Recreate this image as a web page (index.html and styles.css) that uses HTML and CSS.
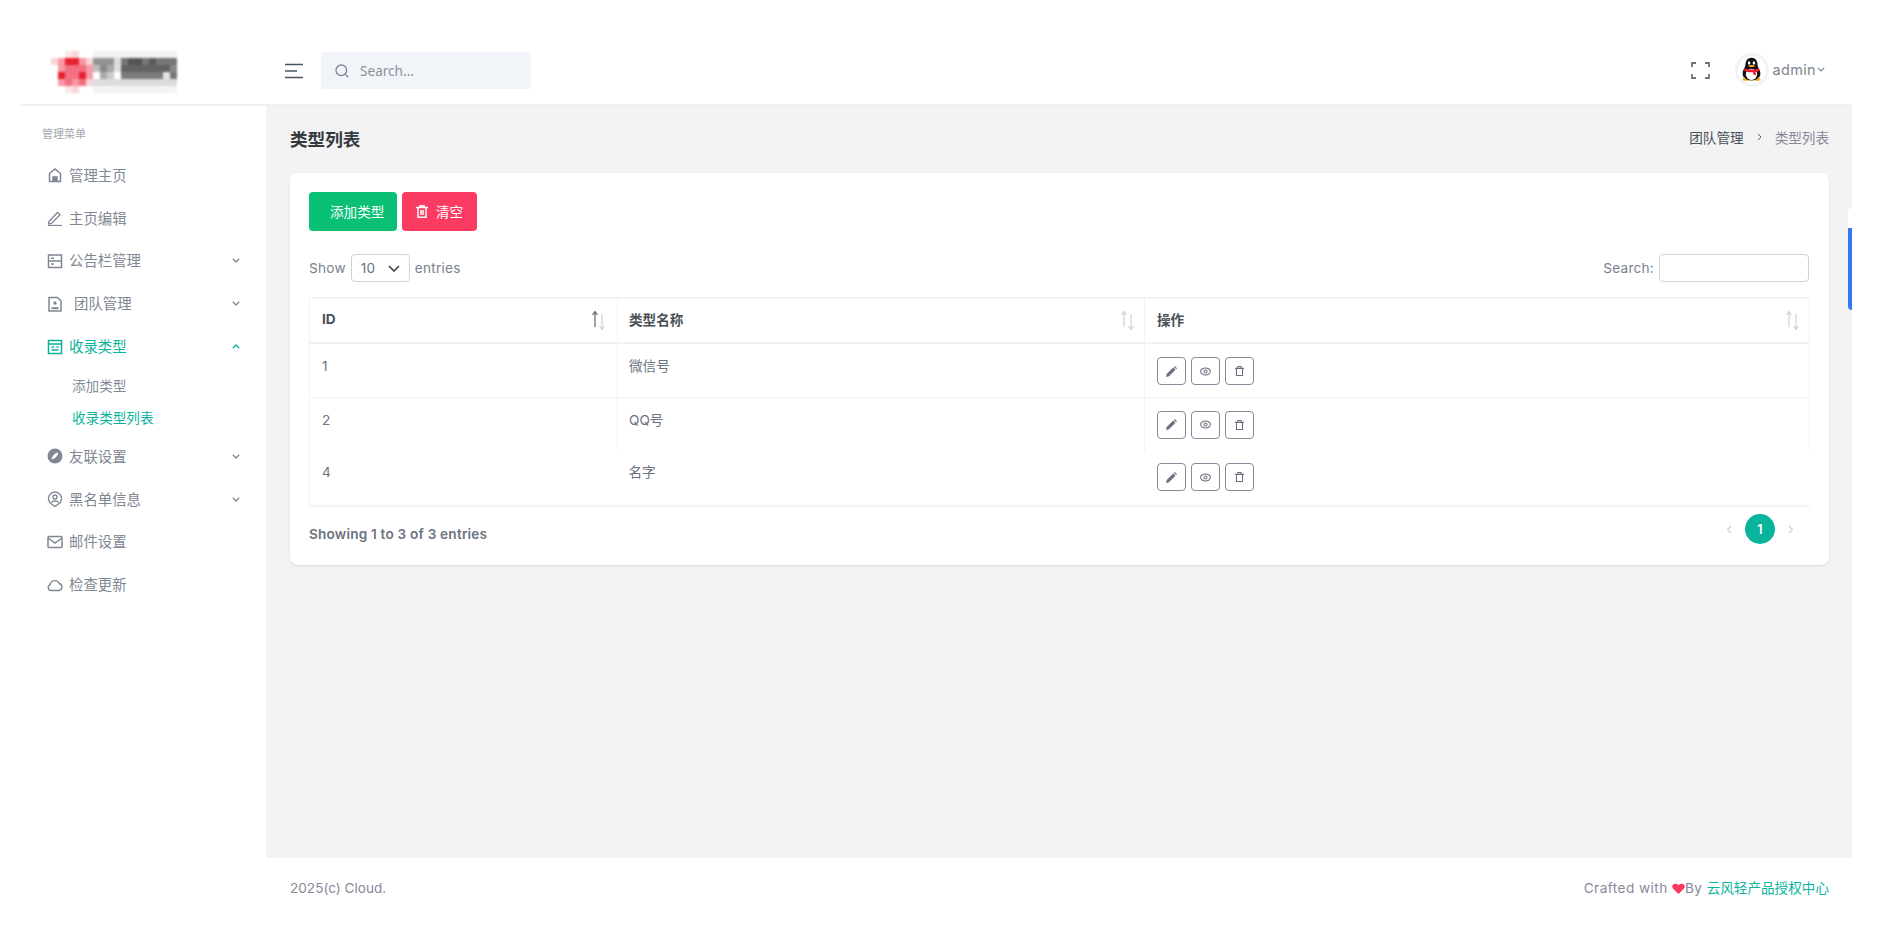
FILE: index.html
```html
<!DOCTYPE html>
<html lang="zh">
<head>
<meta charset="utf-8">
<title>类型列表</title>
<link rel="stylesheet" href="styles.css">
</head>
<body>
<div class="page">
  <header class="topbar">
    <div class="brand">
      <svg class="logo" width="126" height="43" viewBox="0 0 18 6" shape-rendering="crispEdges">
        <g fill="#fde6e9"><rect x="2" y="0" width="1" height="1"/><rect x="2" y="5" width="1" height="1"/></g>
        <g fill="#fbd3d8"><rect x="3" y="0" width="1" height="1"/><rect x="0" y="1" width="1" height="1"/><rect x="5" y="1" width="1" height="1"/><rect x="5" y="4" width="1" height="1"/><rect x="3" y="5" width="1" height="1"/></g>
        <g fill="#f89aa5"><rect x="1" y="1" width="1" height="1"/><rect x="1" y="2" width="1" height="1"/><rect x="4" y="1" width="1" height="1"/><rect x="5" y="2" width="1" height="1"/><rect x="5" y="3" width="1" height="1"/><rect x="1" y="4" width="1" height="1"/><rect x="3" y="4" width="1" height="1"/></g>
        <g fill="#e8202f"><rect x="2" y="1" width="1" height="1"/><rect x="3" y="1" width="1" height="1"/><rect x="1" y="3" width="1" height="1"/><rect x="4" y="3" width="1" height="1"/></g>
        <g fill="#f2707f"><rect x="2" y="2" width="1" height="1"/><rect x="3" y="2" width="1" height="1"/><rect x="4" y="2" width="1" height="1"/><rect x="2" y="3" width="1" height="1"/><rect x="3" y="3" width="1" height="1"/><rect x="2" y="4" width="1" height="1"/><rect x="4" y="4" width="1" height="1"/></g>
        <rect x="6" y="0" width="12" height="1" fill="#f1f1f1"/>
        <rect x="6" y="5" width="12" height="1" fill="#f4f4f4"/>
        <rect x="6" y="4" width="12" height="1" fill="#dcdcdc"/>
        <rect x="6" y="1" width="3" height="1" fill="#949494"/>
        <rect x="9" y="1" width="1" height="1" fill="#dcdcdc"/>
        <rect x="10" y="1" width="8" height="1" fill="#777"/>
        <rect x="11" y="1" width="2" height="1" fill="#555"/>
        <rect x="14" y="1" width="1" height="1" fill="#5a5a5a"/>
        <rect x="6" y="2" width="1" height="1" fill="#bdbdbd"/>
        <rect x="7" y="2" width="1" height="1" fill="#888"/>
        <rect x="8" y="2" width="1" height="1" fill="#aaa"/>
        <rect x="9" y="2" width="1" height="1" fill="#dedede"/>
        <rect x="10" y="2" width="7" height="1" fill="#626262"/>
        <rect x="17" y="2" width="1" height="1" fill="#888"/>
        <rect x="6" y="3" width="1" height="1" fill="#fff"/>
        <rect x="7" y="3" width="1" height="1" fill="#aaa"/>
        <rect x="8" y="3" width="1" height="1" fill="#ccc"/>
        <rect x="9" y="3" width="1" height="1" fill="#fff"/>
        <rect x="10" y="3" width="6" height="1" fill="#7b7b7b"/>
        <rect x="16" y="3" width="1" height="1" fill="#e4e4e4"/>
        <rect x="17" y="3" width="1" height="1" fill="#777"/>
      </svg>
    </div>
    <button class="burger" type="button" aria-label="menu">
      <svg width="18" height="16" viewBox="0 0 18 16" fill="none" stroke="#4a5560" stroke-width="1.6"><path d="M0 1.500h18M0 8h12M0 14.500h18"/></svg>
    </button>
    <div class="search">
      <svg width="14" height="14" viewBox="0 0 14 14" fill="none" stroke="#7d8894" stroke-width="1.3"><circle cx="6.300" cy="6.300" r="5.300"/><path d="M10.200 10.200l3 3"/></svg>
      <span>Search...</span>
    </div>
    <div class="user">
      <svg class="full" width="19" height="17" viewBox="0 0 19 17" fill="none" stroke="#6a737d" stroke-width="1.8"><path d="M1 5V1h4M14 1h4v4M18 12v4h-4M5 16H1v-4"/></svg>
      <span class="avatar">
        <svg width="21" height="25" viewBox="0 0 26 29">
          <ellipse cx="6" cy="26.500" rx="4" ry="2" fill="#f2a61f"/>
          <ellipse cx="20" cy="26.500" rx="4" ry="2" fill="#f2a61f"/>
          <path d="M13 0c5 0 7.500 4 7.500 9 0 3 3.500 6 3.500 10 0 3-1 5-2.500 5.500C20 27 17 28 13 28s-7-1-8.500-3.500C3 24 2 22 2 19c0-4 3.500-7 3.500-10C5.500 4 8 0 13 0z" fill="#111"/>
          <ellipse cx="13" cy="20.500" rx="7" ry="7" fill="#fff"/>
          <ellipse cx="10" cy="6.500" rx="1.500" ry="2.200" fill="#fff"/>
          <ellipse cx="16" cy="6.500" rx="1.500" ry="2.200" fill="#fff"/>
          <path d="M8.500 9.800c2-1.200 7-1.200 9 0-1.500 2.200-7.500 2.200-9 0z" fill="#f2a61f"/>
          <path d="M4 13c5 2 13 2 18 0l1 3c-2 1-4 1.500-5 1.500l.5 4-3-.5-1-3.300c-3 .3-7 0-10.500-1.700z" fill="#e5202b"/>
        </svg>
      </span>
      <span class="uname">admin</span>
      <svg class="uchev" width="8" height="5" viewBox="0 0 8 5" fill="none" stroke="#7d8590" stroke-width="1.2"><path d="M.8.8L4 4l3.200-3.200"/></svg>
    </div>
  </header>

  <div class="body">
    <aside class="sidebar">
      <div class="menu-label">管理菜单</div>
      <ul class="menu">
        <li class="item">
          <svg class="ico" viewBox="0 0 16 16" fill="none" stroke="currentColor" stroke-width="1.5"><path d="M2.500 14.500V6.500L8 2l5.500 4.500v8z"/><path d="M6 14.500V10h4v4.500" fill="currentColor"/></svg>
          <span>管理主页</span>
        </li>
        <li class="item">
          <svg class="ico" viewBox="0 0 16 16" fill="none" stroke="currentColor" stroke-width="1.300"><path d="M2 11.500L10.500 2.500l2.500 2.300-8.500 8.700-3 .5z"/><path d="M1 15.500h14"/></svg>
          <span>主页编辑</span>
        </li>
        <li class="item">
          <svg class="ico" viewBox="0 0 16 16" fill="none" stroke="currentColor" stroke-width="1.500"><rect x="1.500" y="2" width="13" height="12.500"/><path d="M1.500 8h13M4 5.200h3M4 11h3"/></svg>
          <span>公告栏管理</span>
          <svg class="chev" viewBox="0 0 8 5" fill="none" stroke="currentColor" stroke-width="1.300"><path d="M.8.8L4 4l3.200-3.200"/></svg>
        </li>
        <li class="item">
          <svg class="ico" viewBox="0 0 16 16" fill="none" stroke="currentColor" stroke-width="1.500"><path d="M2 1.500h8.500L14 5v10H2z"/><circle cx="8" cy="7" r="1.700" fill="currentColor" stroke="none"/><path d="M4.500 12.200h7" stroke-width="2"/></svg>
          <span class="shift">团队管理</span>
          <svg class="chev" viewBox="0 0 8 5" fill="none" stroke="currentColor" stroke-width="1.300"><path d="M.8.8L4 4l3.200-3.200"/></svg>
        </li>
        <li class="item active">
          <svg class="ico" viewBox="0 0 16 16" fill="none" stroke="currentColor" stroke-width="1.500"><rect x="1.500" y="1.500" width="13" height="13"/><path d="M1.500 5h13M4.500 8h2.500M9.500 8h2M4.500 11h7"/></svg>
          <span>收录类型</span>
          <svg class="chev" viewBox="0 0 8 5" fill="none" stroke="currentColor" stroke-width="1.300"><path d="M.8 4.200L4 1l3.200 3.200"/></svg>
        </li>
        <li class="subs">
          <a class="sub">添加类型</a>
          <a class="sub sub-on">收录类型列表</a>
        </li>
        <li class="item">
          <svg class="ico" viewBox="0 0 16 16"><circle cx="8" cy="8" r="7.500" fill="currentColor"/><path d="M11.500 4.500c-3.500.5-6 2.500-7 7 3.500-.5 6-3 7-7z" fill="#fff"/></svg>
          <span>友联设置</span>
          <svg class="chev" viewBox="0 0 8 5" fill="none" stroke="currentColor" stroke-width="1.300"><path d="M.8.800L4 4l3.200-3.200"/></svg>
        </li>
        <li class="item">
          <svg class="ico" viewBox="0 0 16 16" fill="none" stroke="currentColor" stroke-width="1.400"><path d="M5 13.300A6.500 6.500 0 1 1 11 13.300L8 15.500z"/><circle cx="8" cy="6" r="2"/><path d="M4.500 11.500c1-2 6-2 7 0"/></svg>
          <span>黑名单信息</span>
          <svg class="chev" viewBox="0 0 8 5" fill="none" stroke="currentColor" stroke-width="1.300"><path d="M.8.800L4 4l3.200-3.200"/></svg>
        </li>
        <li class="item">
          <svg class="ico" viewBox="0 0 16 16" fill="none" stroke="currentColor" stroke-width="1.500"><rect x="1" y="2.500" width="14" height="11" rx="1"/><path d="M1 4l7 5 7-5"/></svg>
          <span>邮件设置</span>
        </li>
        <li class="item">
          <svg class="ico" viewBox="0 0 16 16" fill="none" stroke="currentColor" stroke-width="1.400"><path d="M4 13.500a3 3 0 0 1-.8-5.800 4.700 4.700 0 0 1 9-1.200 3.600 3.600 0 0 1-.2 7z"/></svg>
          <span>检查更新</span>
        </li>
      </ul>
    </aside>

    <main class="main">
      <div class="content">
        <div class="title-row">
          <h1>类型列表</h1>
          <div class="crumbs"><span class="crumb-link">团队管理</span><svg width="5" height="8" viewBox="0 0 5 8" fill="none" stroke="#5c6470" stroke-width="1"><path d="M1 1l3 3-3 3"/></svg><span>类型列表</span></div>
        </div>

        <section class="card">
          <div class="actions">
            <button class="btn btn-add" type="button">添加类型</button>
            <button class="btn btn-clear" type="button">
              <svg width="12" height="13" viewBox="0 0 12 13" fill="none" stroke="#fff" stroke-width="1.500"><path d="M0 2.500h12M4 2.500V.8h4v1.700M2 2.500v9.700h8V2.500M5 5v5M7 5v5"/></svg>
              <span>清空</span>
            </button>
          </div>

          <div class="controls">
            <div class="ctl">Show
              <span class="select">10<svg width="12" height="7" viewBox="0 0 12 7" fill="none" stroke="#444" stroke-width="1.700"><path d="M1 1l5 5 5-5"/></svg></span>
              entries</div>
            <div class="ctl">Search: <span class="input"></span></div>
          </div>

          <table class="table">
            <colgroup><col class="c1"><col class="c2"><col class="c3"></colgroup>
            <thead>
              <tr>
                <th>ID<svg class="sort" width="16" height="20" viewBox="0 0 16 20" fill="none" stroke-width="1.200"><path class="dark" d="M4 17V2M1.500 5L4 1.500 6.500 5"/><path class="pale" d="M11 4v15M8.500 16l2.500 3.500 2.500-3.500"/></svg></th>
                <th>类型名称<svg class="sort" width="16" height="20" viewBox="0 0 16 20" fill="none" stroke-width="1.200"><path class="pale" d="M4 17V2M1.500 5L4 1.500 6.500 5"/><path class="pale" d="M11 4v15M8.500 16l2.500 3.500 2.500-3.500"/></svg></th>
                <th>操作<svg class="sort" width="16" height="20" viewBox="0 0 16 20" fill="none" stroke-width="1.200"><path class="pale" d="M4 17V2M1.500 5L4 1.500 6.500 5"/><path class="pale" d="M11 4v15M8.500 16l2.500 3.500 2.500-3.500"/></svg></th>
              </tr>
            </thead>
            <tbody>
              <tr>
                <td>1</td><td>微信号</td>
                <td><div class="ops">
                  <span class="op"><svg width="11" height="11" viewBox="0 0 13 13" fill="#6b7080"><path d="M0 13l.8-3.500L8.500 1.800l2.700 2.700-7.700 7.700zM9.300 1l1-1L13 2.700l-1 1z"/></svg></span>
                  <span class="op"><svg width="11" height="9" viewBox="0 0 13 10" fill="none" stroke="#6b7080" stroke-width="1.200"><ellipse cx="6.500" cy="5" rx="5.800" ry="4.200"/><circle cx="6.500" cy="5" r="1.800"/></svg></span>
                  <span class="op"><svg width="9" height="10" viewBox="0 0 11 12" fill="none" stroke="#6b7080" stroke-width="1.300"><path d="M0 2.800h11M3.500 2.800V.6h4v2.200M1.800 2.800v8.600h7.400V2.800"/></svg></span>
                </div></td>
              </tr>
              <tr class="open">
                <td>2</td><td>QQ号</td>
                <td><div class="ops">
                  <span class="op"><svg width="11" height="11" viewBox="0 0 13 13" fill="#6b7080"><path d="M0 13l.8-3.500L8.500 1.800l2.700 2.700-7.700 7.700zM9.300 1l1-1L13 2.700l-1 1z"/></svg></span>
                  <span class="op"><svg width="11" height="9" viewBox="0 0 13 10" fill="none" stroke="#6b7080" stroke-width="1.200"><ellipse cx="6.500" cy="5" rx="5.800" ry="4.200"/><circle cx="6.500" cy="5" r="1.800"/></svg></span>
                  <span class="op"><svg width="9" height="10" viewBox="0 0 11 12" fill="none" stroke="#6b7080" stroke-width="1.300"><path d="M0 2.800h11M3.500 2.800V.6h4v2.200M1.800 2.800v8.600h7.400V2.800"/></svg></span>
                </div></td>
              </tr>
              <tr class="last">
                <td>4</td><td>名字</td>
                <td><div class="ops">
                  <span class="op"><svg width="11" height="11" viewBox="0 0 13 13" fill="#6b7080"><path d="M0 13l.8-3.500L8.500 1.800l2.700 2.700-7.700 7.700zM9.300 1l1-1L13 2.700l-1 1z"/></svg></span>
                  <span class="op"><svg width="11" height="9" viewBox="0 0 13 10" fill="none" stroke="#6b7080" stroke-width="1.200"><ellipse cx="6.500" cy="5" rx="5.800" ry="4.200"/><circle cx="6.500" cy="5" r="1.800"/></svg></span>
                  <span class="op"><svg width="9" height="10" viewBox="0 0 11 12" fill="none" stroke="#6b7080" stroke-width="1.300"><path d="M0 2.800h11M3.500 2.800V.6h4v2.200M1.800 2.800v8.600h7.400V2.800"/></svg></span>
                </div></td>
              </tr>
            </tbody>
          </table>

          <div class="tfoot">
            <div class="info">Showing 1 to 3 of 3 entries</div>
            <div class="pager">
              <svg width="6" height="9" viewBox="0 0 6 9" fill="none" stroke="#ced4e0" stroke-width="1.400"><path d="M5 1L1.500 4.500 5 8"/></svg>
              <span class="page-on">1</span>
              <svg width="6" height="9" viewBox="0 0 6 9" fill="none" stroke="#ced4e0" stroke-width="1.400"><path d="M1 1l3.500 3.500L1 8"/></svg>
            </div>
          </div>
        </section>
      </div>

      <footer class="footer">
        <span>2025(c) Cloud.</span>
        <span class="credit">Crafted with <svg width="13" height="11" viewBox="0 0 13 11" fill="#f9385f"><path d="M6.500 11L1 5.500C-1.500 2.500 2.500-1.500 6.500 2c4-3.500 8 .5 5.500 3.500z"/></svg>By <a class="link">云风轻产品授权中心</a></span>
      </footer>
    </main>
  </div>
  <div class="side-tab"></div>
</div>
</body>
</html>
```

FILE: styles.css
```css
* { box-sizing: border-box; }
html, body { margin: 0; padding: 0; background: #fff; }
body {
  font-family: Inter, "Noto Sans CJK SC", sans-serif;
  font-size: 13.6px;
  color: #878a99;
  overflow: hidden;
}
.page {
  position: relative;
  width: 1852px;
  height: 946px;
  padding-left: 21px;
  display: flex;
  flex-direction: column;
}

/* top bar */
.topbar {
  height: 106px;
  flex: none;
  padding-top: 37px;
  display: flex;
  align-items: center;
  border-bottom: 2px solid #f0f0f0;
}
.brand { width: 264px; padding-left: 30px; display: flex; align-items: center; }
.logo { display: block; filter: blur(1px); margin-top: 2px; }
.burger { width: 18px; height: 16px; padding: 0; border: 0; background: none; display: block; line-height: 0; }
.search {
  margin-left: 18px;
  width: 210px;
  height: 37px;
  background: #f1f4f8;
  border-radius: 4px;
  padding-left: 14px;
  display: flex;
  align-items: center;
  gap: 11px;
  font-family: "Noto Sans", sans-serif;
  font-size: 13.6px;
  color: #8a929c;
}
.user { margin-left: auto; padding-right: 27px; display: flex; align-items: center; }
.full { margin-right: 25px; }
.avatar {
  width: 34px;
  height: 34px;
  border-radius: 50%;
  background: #fff;
  box-shadow: inset 0 0 0 3px #f1f3f6;
  display: flex;
  align-items: center;
  justify-content: center;
  margin-right: 4px;
  margin-top: -2px;
}
.uname { font-size: 14.4px; letter-spacing: .4px; color: #7d8590; margin-top: -2px; }
.uchev { margin-left: 1px; margin-top: -2px; }

/* layout */
.body { flex: 1; display: flex; min-height: 0; }
.sidebar { width: 245px; flex: none; padding-top: 20px; }
.menu-label { height: 16px; line-height: 16px; padding-left: 21px; font-size: 11px; color: #a3a8b0; margin-bottom: 11px; }
.menu { list-style: none; margin: 0; padding: 0; }
.item {
  height: 42.8px;
  padding: 0 26px;
  display: flex;
  align-items: center;
  font-size: 14.4px;
  color: #7f8794;
}
.ico { width: 16px; height: 16px; flex: none; margin: 2px 6px 0 0; }
.shift { margin-left: 5px; }
.chev { width: 8px; height: 5px; margin-left: auto; margin-top: 2px; }
.active { color: #0ab39c; }
.subs { padding-top: 3px; }
.sub { display: block; height: 32px; line-height: 32px; padding-left: 51px; font-size: 13.6px; color: #848b96; }
.sub-on { color: #0ab39c; }

/* main */
.main { flex: 1; background: #f3f3f3; display: flex; flex-direction: column; min-width: 0; }
.content { flex: 1; padding: 22px 23px 0 24px; }
.title-row { height: 20px; margin-bottom: 25px; display: flex; align-items: center; justify-content: space-between; }
h1 { margin: 0; font-size: 17.6px; font-weight: 700; color: #343a40; }
.crumbs { display: flex; align-items: center; gap: 13px; font-size: 13.6px; color: #878a99; margin-bottom: 2px; }
.crumb-link { color: #495057; }

.card {
  background: #fff;
  border-radius: 8px;
  padding: 19px 20px 21px 19px;
  box-shadow: 0 1px 2px rgba(56, 65, 74, .15);
}
.actions { display: flex; gap: 5px; margin-bottom: 23px; }
.btn {
  height: 39px;
  border: 1px solid transparent;
  border-radius: 4px;
  font: inherit;
  color: #fff;
  display: flex;
  align-items: center;
  padding: 0 0 2px;
}
.btn-add { width: 88px; background: #0ac074; padding-left: 20px; }
.btn-clear { width: 75px; background: #fb3b62; padding-left: 13px; gap: 8px; }
.btn-clear svg { margin-top: 2px; }

.controls { height: 28px; display: flex; justify-content: space-between; align-items: center; margin-bottom: 15px; }
.ctl { display: flex; align-items: center; gap: 5px; color: #7b8190; letter-spacing: .25px; }
.select {
  width: 59px;
  height: 28px;
  border: 1px solid #ced4da;
  border-radius: 4px;
  color: #6b7280;
  padding: 0 9px;
  display: flex;
  align-items: center;
  justify-content: space-between;
}
.input { width: 150px; height: 28px; border: 1px solid #ced4da; border-radius: 4px; background: #fff; }

/* table */
.table { width: 1500px; table-layout: fixed; border-collapse: collapse; color: #6b7280; }
.c1 { width: 308px; }
.c2 { width: 527px; }
.c3 { width: 665px; }
th {
  position: relative;
  height: 45px;
  padding: 0 12px 4px 12px;
  text-align: left;
  font-weight: 700;
  color: #495057;
  border: 1px solid #eff2f7;
  border-width: 2px 1px;
}
td {
  height: 54px;
  padding: 12px 12px 0 12px;
  line-height: 20px;
  vertical-align: top;
  border: 1px solid #f1f3f8;
}
th:nth-child(2), td:nth-child(2) { padding-left: 11px; }
.open td { border-bottom: 0; }
.last td {
  height: 55px;
  padding-top: 11px;
  border-top: 0;
  border-right: 0;
  border-left: 0;
  border-bottom: 2px solid #f3f5f9;
}
.last td:first-child { border-left: 1px solid #f1f3f8; }
.sort { position: absolute; right: 8px; top: 11px; }
th:first-child .sort { right: 10px; }
.dark { stroke: #5c6470; }
.pale { stroke: #ced4da; }
.ops { display: flex; gap: 5px; margin-top: 1px; }
.op {
  width: 29px;
  height: 28px;
  border: 1px solid #878a99;
  border-radius: 4px;
  display: flex;
  align-items: center;
  justify-content: center;
}

.tfoot { display: flex; justify-content: space-between; align-items: flex-start; margin-top: 7px; }
.info { padding-top: 10px; line-height: 20px; font-weight: 600; color: #6b7280; letter-spacing: .2px; }
.pager { width: 68px; display: flex; align-items: center; justify-content: space-between; margin-right: 15px; }
.page-on {
  width: 30px;
  height: 30px;
  border-radius: 50%;
  background: #0ab39c;
  color: #fff;
  font-weight: 600;
  font-size: 12.5px;
  display: flex;
  align-items: center;
  justify-content: center;
}

/* footer */
.footer {
  height: 88px;
  flex: none;
  background: #fff;
  padding: 20px 23px 0 24px;
  line-height: 20px;
  display: flex;
  justify-content: space-between;
  color: #878a99;
}
.credit { letter-spacing: .45px; }
.credit svg { vertical-align: -1px; }
.link { color: #0ab39c; letter-spacing: 0; }

.side-tab {
  position: absolute;
  right: 0;
  top: 208px;
  width: 4px;
  height: 102px;
  background: linear-gradient(#fff 20px, #3577f1 20px);
  border-radius: 5px 0 0 5px;
}
```
